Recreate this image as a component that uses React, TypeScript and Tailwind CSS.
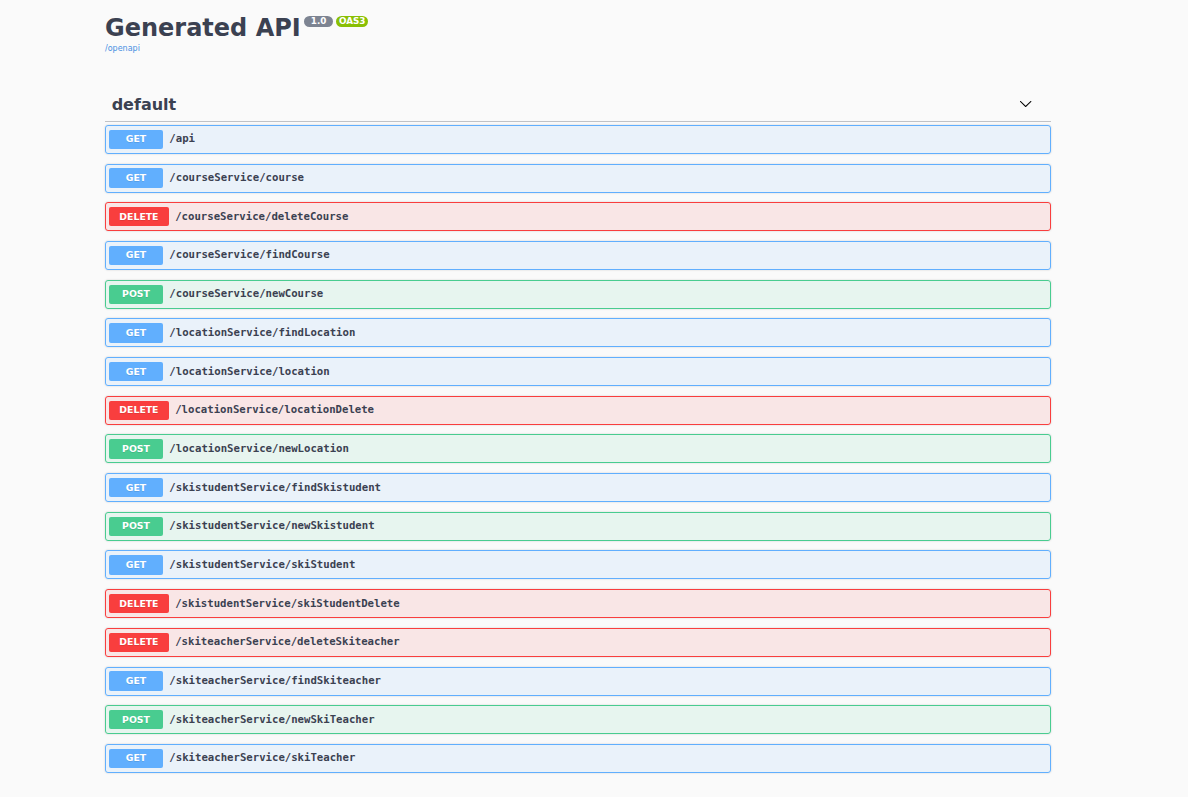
import React from "react";

type Method = "GET" | "POST" | "DELETE";

const endpoints: { method: Method; path: string }[] = [
  { method: "GET", path: "/api" },
  { method: "GET", path: "/courseService/course" },
  { method: "DELETE", path: "/courseService/deleteCourse" },
  { method: "GET", path: "/courseService/findCourse" },
  { method: "POST", path: "/courseService/newCourse" },
  { method: "GET", path: "/locationService/findLocation" },
  { method: "GET", path: "/locationService/location" },
  { method: "DELETE", path: "/locationService/locationDelete" },
  { method: "POST", path: "/locationService/newLocation" },
  { method: "GET", path: "/skistudentService/findSkistudent" },
  { method: "POST", path: "/skistudentService/newSkistudent" },
  { method: "GET", path: "/skistudentService/skiStudent" },
  { method: "DELETE", path: "/skistudentService/skiStudentDelete" },
  { method: "DELETE", path: "/skiteacherService/deleteSkiteacher" },
  { method: "GET", path: "/skiteacherService/findSkiteacher" },
  { method: "POST", path: "/skiteacherService/newSkiTeacher" },
  { method: "GET", path: "/skiteacherService/skiTeacher" },
];

// colour sets per HTTP method
const styles: Record<Method, { row: string; badge: string }> = {
  GET: { row: "bg-[#61affe]/10 border-[#61affe]", badge: "bg-[#61affe]" },
  POST: { row: "bg-[#49cc90]/10 border-[#49cc90]", badge: "bg-[#49cc90]" },
  DELETE: { row: "bg-[#f93e3e]/10 border-[#f93e3e]", badge: "bg-[#f93e3e]" },
};

function Endpoint({ method, path }: { method: Method; path: string }) {
  const s = styles[method];
  return (
    <div
      className={`flex items-center h-[29px] mb-[9.7px] px-[3.33px] border rounded-[3px] shadow-[0_0_2px_rgba(0,0,0,0.19)] cursor-pointer ${s.row}`}
    >
      <span
        className={`flex items-center justify-center h-[19.33px] min-w-[53.33px] px-[10px] rounded-[2px] text-white font-bold text-[9.33px] [text-shadow:0_1px_0_rgba(0,0,0,0.1)] ${s.badge}`}
      >
        {method}
      </span>
      <span className="px-[6.67px] text-[10.67px] font-bold text-[#3b4151] font-['DejaVu_Sans_Mono',monospace]">
        {path}
      </span>
    </div>
  );
}

export default function App() {
  return (
    <div className="min-h-screen bg-[#fafafa] font-['DejaVu_Sans',sans-serif] text-[#3b4151]">
      <div className="ml-[105px] w-[946px] pb-[20px]">
        {/* Info header */}
        <div className="pt-[15.4px]">
          <div className="flex items-start">
            <h2 className="text-[24px] font-bold leading-[27.9px] text-[#3b4151]">Generated API</h2>
            <span className="ml-[3.5px] mt-[1px] block h-[11px] leading-[11px] px-[3.5px] rounded-full bg-[#7d8492] text-white font-bold text-[8.8px] whitespace-pre">
              {" 1.0 "}
            </span>
            <span className="ml-[3px] mt-[1px] block h-[11px] leading-[11px] px-[3px] rounded-full bg-[#89bf04] text-white font-bold text-[8.8px]">
              OAS3
            </span>
          </div>
          <a href="#" className="block text-[8px] leading-[12px] text-[#4990e2]">
            /openapi
          </a>
        </div>

        {/* Tag section */}
        <div className="mt-[34.3px]">
          <div className="flex items-center justify-between h-[32px] pl-[6.67px] pr-[18.7px] border-b border-[#3b4151]/30 mb-[3.33px]">
            <h3 className="text-[16px] font-bold leading-[18.6px] text-[#3b4151]">default</h3>
            <svg width="13.33" height="13.33" viewBox="0 0 20 20" className="-mt-[2px]">
              <path
                fill="#000"
                d="M17.418 6.109c.272-.268.709-.268.979 0s.271.701 0 .969l-7.908 7.83c-.27.268-.707.268-.979 0l-7.908-7.83c-.27-.268-.27-.701 0-.969.271-.268.709-.268.979 0L10 13.25l7.418-7.141z"
              />
            </svg>
          </div>

          {endpoints.map((e) => (
            <Endpoint key={e.method + e.path} method={e.method} path={e.path} />
          ))}
        </div>
      </div>
    </div>
  );
}
